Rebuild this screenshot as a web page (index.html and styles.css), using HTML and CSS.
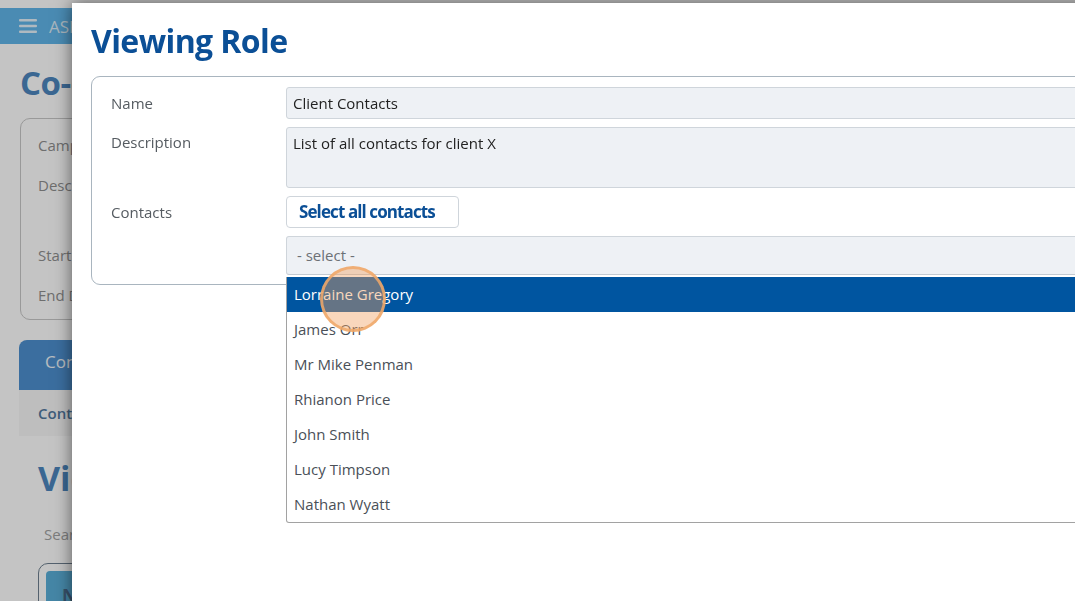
FILE: index.html
```html
<!DOCTYPE html>
<html lang="en">
<head>
<meta charset="utf-8">
<title>Viewing Role</title>
<link rel="stylesheet" href="styles.css">
</head>
<body>
<div class="page">
  <header class="topbar">
    <svg class="burger" width="18" height="14" viewBox="0 0 18 14"><rect x="0" y="0" width="18" height="2.6" rx="1"/><rect x="0" y="5.7" width="18" height="2.6" rx="1"/><rect x="0" y="11.4" width="18" height="2.6" rx="1"/></svg>
    <span class="brand">ASPIRE</span>
  </header>
  <main class="page-body">
    <h1 class="page-title">Co-ordinators</h1>
    <section class="info-box">
      <div class="info-row">Campaign</div>
      <div class="info-row info-tall">Description</div>
      <div class="info-row">Start Date</div>
      <div class="info-row">End Date</div>
    </section>
    <section class="tabs">
      <div class="tab-head">Contacts</div>
      <div class="tab-sub">Contacts</div>
    </section>
    <h2 class="page-sub">Viewing Roles</h2>
    <div class="search-label">Search</div>
    <div class="search-box"><span class="new-btn">New</span></div>
  </main>
</div>

<div class="backdrop"></div>

<div class="modal">
  <h1 class="modal-title">Viewing Role</h1>
  <form class="role-form">
    <label class="f-label">Name</label>
    <div class="f-field"><div class="input">Client Contacts</div></div>

    <label class="f-label f-top">Description</label>
    <div class="f-field"><div class="input textarea">List of all contacts for client X</div></div>

    <label class="f-label">Contacts</label>
    <div class="f-field"><button type="button" class="select-all">Select all contacts</button></div>

    <div class="f-label"></div>
    <div class="f-field select-wrap">
      <div class="input select">- select -</div>
      <ul class="dropdown">
        <li class="active">Lorraine Gregory</li>
        <li>James Orr</li>
        <li>Mr Mike Penman</li>
        <li>Rhianon Price</li>
        <li>John Smith</li>
        <li>Lucy Timpson</li>
        <li>Nathan Wyatt</li>
      </ul>
      <span class="click-dot"></span>
    </div>
  </form>
</div>
</body>
</html>
```

FILE: styles.css
```css
* { box-sizing: border-box; }
html, body { margin: 0; padding: 0; }
body {
  width: 1075px;
  height: 601px;
  overflow: hidden;
  position: relative;
  background: #ffffff;
  font-family: "Open Sans", "Noto Sans", sans-serif;
  font-size: 15px;
  color: #333;
}

/* ---------- background page ---------- */
.page { padding-top: 8px; }
.topbar {
  height: 36px;
  background: #61b5e9;
  display: flex;
  align-items: center;
  padding-left: 19px;
  gap: 12px;
}
.burger { fill: #e4f1fa; }
.brand { color: #dcecf7; font-size: 17px; }

.page-body { padding-left: 20px; }
.page-title {
  margin: 19px 0 0;
  font-size: 33px;
  font-weight: 700;
  color: #4d87be;
  line-height: 40px;
  letter-spacing: -0.5px;
}
.info-box {
  margin-top: 15px;
  width: 500px;
  height: 202px;
  border: 1px solid #c7c7c7;
  border-radius: 10px;
  padding: 14px 17px;
  color: #8f8f8f;
}
.info-row { height: 40px; line-height: 24px; }
.info-tall { height: 70px; }

.tabs { margin-top: 20px; margin-left: -1px; width: 600px; }
.tab-head {
  height: 50px;
  background: #4d90cf;
  border-radius: 8px 8px 0 0;
  color: #f0f5fa;
  font-size: 17px;
  line-height: 44px;
  padding-left: 26px;
}
.tab-sub {
  height: 46px;
  background: #f7f7f7;
  color: #52799f;
  font-weight: 600;
  line-height: 46px;
  padding-left: 19px;
}
.page-sub {
  margin: 20px 0 0 18px;
  font-size: 34px;
  font-weight: 700;
  color: #4d87be;
  line-height: 44px;
}
.search-label {
  margin: 23px 0 0 24px;
  color: #a3a3a3;
  line-height: 22px;
}
.search-box {
  margin: 18px 0 0 18px;
  width: 400px;
  height: 60px;
  border: 1px solid #6e7f8f;
  border-radius: 10px;
  padding: 7px;
}
.new-btn {
  display: inline-block;
  width: 60px;
  height: 50px;
  background: #5aafd9;
  border-radius: 4px;
  color: #4a6a8a;
  font-weight: 700;
  font-size: 18px;
  padding: 12px 0 0 16px;
}

.backdrop {
  position: fixed;
  inset: 0;
  background: rgba(0, 0, 0, 0.23);
}

/* ---------- modal ---------- */
.modal {
  position: absolute;
  left: 72px;
  top: 3px;
  width: 1060px;
  height: 640px;
  background: #ffffff;
  box-shadow: 0 0 16px rgba(0, 0, 0, 0.55);
  padding: 17px 0 0 19px;
}
.modal-title {
  margin: 0;
  font-size: 32px;
  line-height: 42px;
  font-weight: 700;
  color: #0b4f96;
  letter-spacing: -0.6px;
}
.role-form {
  margin-top: 14px;
  width: 1060px;
  border: 1px solid #a9b5bf;
  border-radius: 9px;
  padding: 10px 0 9px 19px;
  display: grid;
  grid-template-columns: 175px 1fr;
  row-gap: 8px;
}
.f-label {
  color: #555b61;
  font-size: 15px;
  display: flex;
  align-items: center;
  padding-bottom: 1px;
}
.f-top { align-items: flex-start; padding-top: 5px; }
.f-field { position: relative; }

.input {
  background: #eef1f5;
  border: 1px solid #cfd5db;
  border-radius: 3px;
  height: 32px;
  padding: 5px 6px;
  color: #222;
  font-size: 15px;
  line-height: 20px;
}
.textarea { height: 61px; }
.select {
  height: 39px;
  padding: 8px 10px;
  color: #6c7075;
  border-bottom-color: #c3cad1;
}

.select-all {
  height: 32px;
  width: 173px;
  background: #ffffff;
  border: 1px solid #cfd5db;
  border-radius: 4px;
  font-family: "Open Sans", "Noto Sans", sans-serif;
  font-weight: 700;
  font-size: 17px;
  letter-spacing: -0.9px;
  color: #0b4f96;
  text-align: left;
  padding: 0 0 1px 12px;
}

.dropdown {
  position: absolute;
  left: 0;
  top: 41px;
  width: 100%;
  margin: 0;
  padding: 0;
  list-style: none;
  background: #ffffff;
  border: 1px solid #a2a2a2;
  border-top: none;
  border-radius: 0 0 3px 3px;
  z-index: 2;
}
.dropdown li {
  height: 35px;
  line-height: 35px;
  padding-left: 7px;
  color: #4a5058;
  font-size: 15px;
}
.dropdown li.active {
  background: #0055a0;
  color: #ffffff;
}
.click-dot {
  position: absolute;
  left: 34px;
  top: 30px;
  width: 66px;
  height: 66px;
  border-radius: 50%;
  background: rgba(240, 160, 96, 0.42);
  border: 3px solid rgba(240, 168, 104, 0.85);
  z-index: 3;
}
```
